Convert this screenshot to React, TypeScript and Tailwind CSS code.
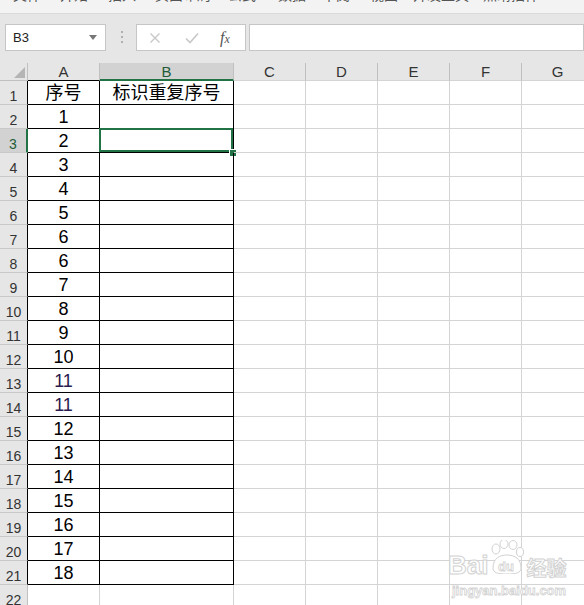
import React from 'react';

const tabs = [
  { label: '文件', w: 'w-[47px]' },
  { label: '开始', w: 'w-[48px]' },
  { label: '插入', w: 'w-[47px]' },
  { label: '页面布局', w: 'w-[73px]' },
  { label: '公式', w: 'w-[50px]' },
  { label: '数据', w: 'w-[44px]' },
  { label: '审阅', w: 'w-[48px]' },
  { label: '视图', w: 'w-[43px]' },
  { label: '开发工具', w: 'w-[70px]' },
  { label: '点睛插件', w: 'w-[90px]' },
];

const cols = [
  { key: 'A', w: 'w-[72px]' },
  { key: 'B', w: 'w-[134px]' },
  { key: 'C', w: 'w-[72px]' },
  { key: 'D', w: 'w-[72px]' },
  { key: 'E', w: 'w-[72px]' },
  { key: 'F', w: 'w-[72px]' },
  { key: 'G', w: 'w-[72px]' },
];

const values = ['1', '2', '3', '4', '5', '6', '6', '7', '8', '9', '10', '11', '11', '12', '13', '14', '15', '16', '17', '18'];

const font = "font-['Liberation_Sans','Noto_Sans_CJK_SC',sans-serif]";

const Watermark = () => (
  <div className="absolute left-[448px] top-[548px] flex flex-col items-start pointer-events-none select-none">
    <div className="relative flex items-end h-[30px]">
      <span className="text-[26px] font-bold leading-none text-white [-webkit-text-stroke:1px_#d2d2d2] font-['Liberation_Sans',sans-serif]">
        Bai
      </span>
      <div className="relative w-[38px] h-[30px]">
        <svg width="38" height="34" viewBox="0 0 38 34" className="absolute left-0 -top-[8px]">
          <g fill="white" stroke="#d2d2d2" strokeWidth="1">
            <ellipse cx="8" cy="9" rx="4" ry="5" />
            <ellipse cx="16" cy="4" rx="4" ry="4.5" />
            <ellipse cx="25" cy="5" rx="4" ry="4.5" />
            <ellipse cx="32" cy="12" rx="3.5" ry="4.5" />
            <path d="M5 28 C5 18 12 15 19 15 C27 15 33 19 33 28 C33 33 28 34 19 34 C10 34 5 33 5 28 Z" />
          </g>
          <text x="10" y="31" fontSize="13" fontWeight="bold" fill="white" stroke="#d2d2d2" strokeWidth="0.8" fontFamily="Liberation Sans, sans-serif">
            du
          </text>
        </svg>
      </div>
      <span className="text-[20px] font-bold leading-none text-white [-webkit-text-stroke:1px_#d2d2d2] font-['Noto_Sans_CJK_SC',sans-serif]">
        经验
      </span>
    </div>
    <span className="mt-[6px] ml-[4px] text-[13px] font-bold leading-none text-white [-webkit-text-stroke:0.8px_#d2d2d2] font-['Liberation_Sans',sans-serif]">
      jingyan.baidu.com
    </span>
  </div>
);

export default function App() {
  return (
    <div className={`relative w-[584px] h-[605px] overflow-hidden bg-white ${font}`}>
      {/* ribbon tabs, cut at the top */}
      <div className="h-[14px] bg-[#f3f3f3] border-b border-[#dadada] overflow-hidden">
        <div className="flex pl-[13px] -mt-[13px] text-[14px] leading-[16px] text-[#555]">
          {tabs.map((t) => (
            <div key={t.label} className={`${t.w} shrink-0 whitespace-nowrap`}>
              {t.label}
            </div>
          ))}
        </div>
      </div>

      {/* formula bar */}
      <div className="h-[49px] bg-[#e6e6e6] flex items-start pt-[10px]">
        <div className="ml-[5px] w-[101px] h-[27px] bg-white border border-[#c6c6c6] flex items-center justify-between pl-[7px] pr-[8px]">
          <span className="text-[13px] text-[#222]">B3</span>
          <svg width="8" height="5" viewBox="0 0 8 5">
            <path d="M0 0 H8 L4 5 Z" fill="#777" />
          </svg>
        </div>
        <div className="ml-[15px] mt-[7px] flex flex-col gap-[3px]">
          <div className="w-[2px] h-[2px] bg-[#b0b0b0]" />
          <div className="w-[2px] h-[2px] bg-[#b0b0b0]" />
          <div className="w-[2px] h-[2px] bg-[#b0b0b0]" />
        </div>
        <div className="ml-[13px] w-[110px] h-[27px] bg-white border border-[#c6c6c6] flex items-center">
          <svg width="12" height="12" viewBox="0 0 12 12" className="ml-[12px]">
            <path d="M1.5 1.5 L10.5 10.5 M10.5 1.5 L1.5 10.5" stroke="#c8c8c8" strokeWidth="1.4" />
          </svg>
          <svg width="14" height="12" viewBox="0 0 14 12" className="ml-[24px]">
            <path d="M1 6.5 L5 10.5 L13 1.5" stroke="#c8c8c8" strokeWidth="1.6" fill="none" />
          </svg>
          <span className="ml-[21px] text-[16px] italic text-[#555] font-['Liberation_Serif',serif]">
            f<span className="text-[12px]">x</span>
          </span>
        </div>
        <div className="ml-[3px] flex-1 h-[27px] bg-white border border-[#c6c6c6]" />
      </div>

      {/* sheet */}
      <div className="flex flex-col text-black">
        {/* column headers */}
        <div className="flex h-[18px]">
          <div className="relative w-[28px] shrink-0 bg-[#e6e6e6] border-r border-b border-[#c0c0c0]">
            <div className="absolute right-[2px] bottom-[2px] w-0 h-0 border-l-[11px] border-l-transparent border-b-[11px] border-b-[#b5b5b5]" />
          </div>
          {cols.map((c) => (
            <div
              key={c.key}
              className={`${c.w} shrink-0 flex items-center justify-center text-[15px] leading-none border-r border-[#c0c0c0] ${
                c.key === 'B'
                  ? 'bg-[#d2d2d2] border-b-2 border-b-[#217346] text-[#1e5c38]'
                  : c.key === 'A'
                  ? 'bg-[#e6e6e6] border-b border-b-black text-[#333]'
                  : 'bg-[#e6e6e6] border-b border-b-[#d4d4d4] text-[#333]'
              }`}
            >
              {c.key}
            </div>
          ))}
        </div>

        {/* rows */}
        {Array.from({ length: 22 }, (_, i) => i + 1).map((r) => {
          const inTable = r <= 21;
          const selected = r === 3;
          const aText = r === 1 ? '序号' : values[r - 2];
          const bText = r === 1 ? '标识重复序号' : '';
          return (
            <div key={r} className="flex h-[24px] shrink-0">
              <div
                className={`w-[28px] shrink-0 flex items-end justify-center pb-[1px] text-[14px] leading-none border-b border-b-[#c8c8c8] ${
                  selected
                    ? 'bg-[#d2d2d2] text-[#1e5c38] border-r-2 border-r-[#217346]'
                    : inTable
                    ? 'bg-[#e6e6e6] text-[#333] border-r border-r-black'
                    : 'bg-[#e6e6e6] text-[#333] border-r border-r-[#c0c0c0]'
                }`}
              >
                {r}
              </div>
              {cols.map((c) => {
                const black = inTable && (c.key === 'A' || c.key === 'B');
                const isSel = selected && c.key === 'B';
                const text = c.key === 'A' && r <= 21 ? aText : c.key === 'B' ? bText : '';
                const purple = c.key === 'A' && (r === 13 || r === 14);
                return (
                  <div
                    key={c.key}
                    className={`relative ${c.w} shrink-0 flex items-end justify-center pb-[2px] leading-none text-[18px] border-r border-b ${
                      black ? 'border-black' : 'border-[#d4d4d4]'
                    } ${purple ? 'text-[#2a1a4e]' : ''}`}
                  >
                    {text}
                    {isSel && (
                      <>
                        <div className="absolute -left-px -top-px right-0 bottom-0 border-2 border-[#217346]" />
                        <div className="absolute right-[-4px] bottom-[-5px] w-[8px] h-[8px] bg-[#217346] border border-white" />
                      </>
                    )}
                  </div>
                );
              })}
            </div>
          );
        })}
      </div>

      <Watermark />
    </div>
  );
}
